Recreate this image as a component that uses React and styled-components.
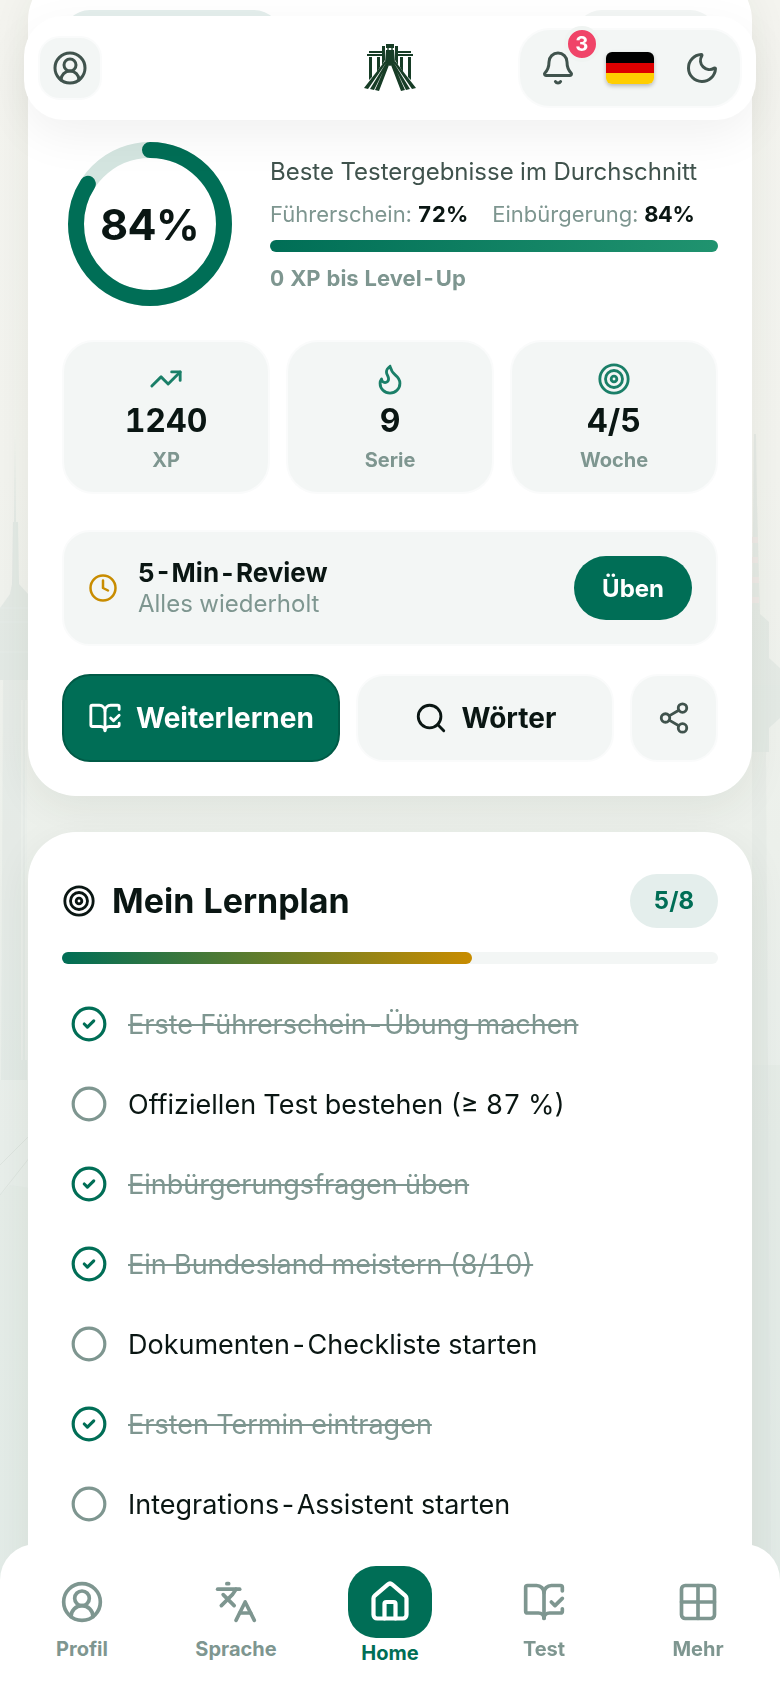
import React, { useState } from "react";
import styled, { createGlobalStyle } from "styled-components";
import {
  Bell,
  BookOpenCheck,
  Circle,
  CircleCheck,
  CircleUserRound,
  Clock,
  Flame,
  Grid2x2,
  House,
  Languages,
  Moon,
  Search,
  Share2,
  Target,
  TrendingUp,
} from "lucide-react";

const colors = {
  primary: "#006e56",
  primaryDark: "#005a46",
  primarySoft: "#e4eeec",
  amber: "#c88c00",
  text: "#0a1613",
  textSoft: "#40534d",
  muted: "#7e9690",
  tile: "#f3f6f5",
  tileBorder: "#fafbfb",
};

const stats = [
  { icon: TrendingUp, value: "1240", label: "XP" },
  { icon: Flame, value: "9", label: "Serie" },
  { icon: Target, value: "4/5", label: "Woche" },
];

const initialTasks = [
  { id: "fuehrerschein", label: "Erste Führerschein-Übung machen", done: true },
  { id: "test", label: "Offiziellen Test bestehen (≥ 87 %)", done: false },
  { id: "fragen", label: "Einbürgerungsfragen üben", done: true },
  { id: "bundesland", label: "Ein Bundesland meistern (8/10)", done: true },
  { id: "dokumente", label: "Dokumenten-Checkliste starten", done: false },
  { id: "termin", label: "Ersten Termin eintragen", done: true },
  { id: "assistent", label: "Integrations-Assistent starten", done: false },
];

const navItems = [
  { icon: CircleUserRound, label: "Profil" },
  { icon: Languages, label: "Sprache" },
  { icon: House, label: "Home", active: true },
  { icon: BookOpenCheck, label: "Test" },
  { icon: Grid2x2, label: "Mehr" },
];

function LogoHalf() {
  return (
    <>
      <path d="M6 8h13v2H6zM4 11h15v2H4z" />
      <path d="M6 14h3v20l-3 3zM14 14h3v10l-3 5z" />
      <path d="M19 3h3v14l-3 5z" />
      <path d="M22 18L1 45l4 1 18-26zM23 20L7 46l4 1 13-26zM24 20L12 47l4 1 10-26z" />
    </>
  );
}

function Logo() {
  return (
    <svg width="54" height="50" viewBox="0 0 54 50" fill="#173d26">
      <LogoHalf />
      <g transform="translate(54 0) scale(-1 1)">
        <LogoHalf />
      </g>
      <path d="M23 1h8v4h-8zM23 7h8l1 13-5 3-5-3z" />
      <path d="M24 5h2v2h-2zM28 5h2v2h-2z" fill="#5d7a68" />
    </svg>
  );
}

function ScoreRing({ value }) {
  const length = 2 * Math.PI * 74;
  return (
    <Ring>
      <svg width="176" height="176" viewBox="0 0 176 176" fill="none">
        <circle cx="88" cy="88" r="74" stroke="#d4e5e0" strokeWidth="16" />
        <circle
          cx="88"
          cy="88"
          r="74"
          stroke={colors.primary}
          strokeWidth="16"
          strokeLinecap="round"
          strokeDasharray={`${(length * value) / 100} ${length}`}
          transform="rotate(-90 88 88)"
        />
      </svg>
      <RingValue>{value}%</RingValue>
    </Ring>
  );
}

function Skyline() {
  return (
    <Backdrop>
      <svg width="30" height="1250" viewBox="0 0 30 1250">
        <g fill="#d6dfdc" opacity=".5">
          <path d="M15 4l1 88h2l1 62 9 10v8h2v78H0v-72l10-14 2-10 1-62h1z" />
          <path d="M3 250h24v400H1z" opacity=".6" />
          <path d="M0 765l10-10 20 3v492H0z" opacity=".35" />
        </g>
        <path d="M0 178h30M0 192h30M0 222h30" stroke="#e6ebe7" />
        <path d="M22 270v360M26 270v360" stroke="#eef2ed" />
        <path d="M0 735l30-30M0 765l30-38" stroke="#dde4df" />
      </svg>
      <svg width="28" height="1250" viewBox="0 0 28 1250">
        <g fill="#d6dfdc" opacity=".45">
          <path d="M2 4h2l1 70 3 110 9 8v36l11 10v50l-11 10v24H0V184z" />
          <path d="M0 322h14l6 928H0z" opacity=".5" />
          <path d="M0 635h28v615H0z" opacity=".4" />
        </g>
        <path d="M0 110h6M0 130h6M0 150h7M0 170h7" stroke="#eee9e6" strokeWidth="6" />
      </svg>
    </Backdrop>
  );
}

export default function App() {
  const [tasks, setTasks] = useState(initialTasks);

  const toggle = (id) =>
    setTasks(tasks.map((t) => (t.id === id ? { ...t, done: !t.done } : t)));

  const done = tasks.filter((t) => t.done).length + 1;
  const total = tasks.length + 1;

  return (
    <Page>
      <GlobalStyle />
      <Skyline />
      <Header>
        <ProfileButton type="button" aria-label="Profil">
          <CircleUserRound size={36} />
        </ProfileButton>
        <Logo />
        <HeaderActions>
          <ActionButton type="button" aria-label="Benachrichtigungen">
            <Bell size={36} />
            <Badge>3</Badge>
          </ActionButton>
          <ActionButton type="button" aria-label="Deutsch">
            <Flag />
          </ActionButton>
          <ActionButton type="button" aria-label="Dunkelmodus">
            <Moon size={36} />
          </ActionButton>
        </HeaderActions>
      </Header>

      <Main>
        <SummaryCard>
          <ChipRow>
            <Chip $width="220px" $color={colors.primarySoft} />
            <Chip $width="144px" $color={colors.tile} />
          </ChipRow>
          <Score>
            <ScoreRing value={84} />
            <ScoreText>
              <ScoreTitle>Beste Testergebnisse im Durchschnitt</ScoreTitle>
              <ScoreDetails>
                <span>
                  Führerschein: <strong>72%</strong>
                </span>
                <span>
                  Einbürgerung: <strong>84%</strong>
                </span>
              </ScoreDetails>
              <LevelBar />
              <LevelHint>0 XP bis Level-Up</LevelHint>
            </ScoreText>
          </Score>
          <Stats>
            {stats.map(({ icon: Icon, value, label }) => (
              <Stat key={label}>
                <Icon size={34} />
                <StatValue>{value}</StatValue>
                <StatLabel>{label}</StatLabel>
              </Stat>
            ))}
          </Stats>
          <Review>
            <Clock size={30} color={colors.amber} />
            <ReviewText>
              <ReviewTitle>5-Min-Review</ReviewTitle>
              <ReviewHint>Alles wiederholt</ReviewHint>
            </ReviewText>
            <PracticeButton type="button">Üben</PracticeButton>
          </Review>
          <Actions>
            <PrimaryButton type="button">
              <BookOpenCheck size={34} />
              Weiterlernen
            </PrimaryButton>
            <SecondaryButton type="button">
              <Search size={34} />
              Wörter
            </SecondaryButton>
            <ShareButton type="button" aria-label="Teilen">
              <Share2 size={34} />
            </ShareButton>
          </Actions>
        </SummaryCard>

        <PlanCard>
          <PlanHeader>
            <Target size={34} />
            <PlanTitle>Mein Lernplan</PlanTitle>
            <PlanCount>
              {done}/{total}
            </PlanCount>
          </PlanHeader>
          <Progress>
            <ProgressFill style={{ width: `${(done / total) * 100}%` }} />
          </Progress>
          <TaskList>
            {tasks.map((task) => (
              <li key={task.id}>
                <Task $done={task.done}>
                  <TaskInput
                    type="checkbox"
                    checked={task.done}
                    onChange={() => toggle(task.id)}
                  />
                  {task.done ? <CircleCheck size={38} /> : <Circle size={38} />}
                  <TaskLabel>{task.label}</TaskLabel>
                </Task>
              </li>
            ))}
          </TaskList>
        </PlanCard>
      </Main>

      <Nav>
        {navItems.map(({ icon: Icon, label, active }) => (
          <NavLink key={label} href="#" $active={active}>
            <NavIcon $active={active}>
              <Icon size={44} strokeWidth={active ? 2.3 : 2} />
            </NavIcon>
            {label}
          </NavLink>
        ))}
      </Nav>
    </Page>
  );
}

const GlobalStyle = createGlobalStyle`
  * {
    box-sizing: border-box;
  }
  body {
    margin: 0;
    overflow: hidden;
    font-family: Inter, "Liberation Sans", sans-serif;
    font-variant-numeric: tabular-nums;
    color: ${colors.text};
  }
  button {
    font: inherit;
    font-variant-numeric: inherit;
    color: inherit;
    cursor: pointer;
  }
  svg {
    display: block;
    flex-shrink: 0;
  }
`;

const Page = styled.div`
  height: 100vh;
  overflow: hidden;
  background: linear-gradient(
    #f4f4ef 0%,
    #f2f3ee 28%,
    #ecf0eb 50%,
    #e8eeea 68%,
    #e5edea 100%
  );
`;

const Backdrop = styled.div`
  position: fixed;
  inset: 430px 0 0;
  display: flex;
  justify-content: space-between;
`;

const Header = styled.header`
  position: fixed;
  z-index: 2;
  top: 16px;
  left: 24px;
  right: 24px;
  height: 104px;
  padding: 0 14px;
  display: grid;
  grid-template-columns: 1fr auto 1fr;
  align-items: center;
  border-radius: 40px;
  background: #fff;
  box-shadow: 0 16px 48px rgba(10, 22, 19, 0.06);
`;

const ProfileButton = styled.button`
  display: grid;
  place-items: center;
  width: 64px;
  height: 64px;
  padding: 0;
  border: 2px solid ${colors.tileBorder};
  border-radius: 22px;
  background: ${colors.tile};
  && {
    color: ${colors.textSoft};
  }
`;

const HeaderActions = styled.div`
  justify-self: end;
  display: flex;
  padding: 0 2px;
  border: 2px solid ${colors.tileBorder};
  border-radius: 32px;
  background: ${colors.tile};
  color: ${colors.textSoft};
`;

const ActionButton = styled.button`
  position: relative;
  display: grid;
  place-items: center;
  width: 72px;
  height: 76px;
  padding: 0;
  border: none;
  background: none;
`;

const Badge = styled.span`
  position: absolute;
  top: -4px;
  right: -6px;
  width: 36px;
  height: 36px;
  border: 4px solid #f0f4f2;
  border-radius: 50%;
  background: #f04468;
  color: #fff;
  font-size: 20px;
  font-weight: 700;
  line-height: 28px;
  text-align: center;
`;

const Flag = styled.span`
  width: 48px;
  height: 32px;
  border-radius: 6px;
  background: linear-gradient(
    #000 0 33%,
    #dd0000 33% 66%,
    #ffce00 66% 100%
  );
  box-shadow: 0 2px 4px rgba(0, 0, 0, 0.25);
`;

const Main = styled.main`
  position: relative;
  display: flex;
  flex-direction: column;
  gap: 36px;
  margin-top: -28px;
  padding: 0 28px;
`;

const Card = styled.section`
  padding: 38px 34px 34px;
  border-radius: 48px;
  background: #fff;
  box-shadow: 0 12px 40px rgba(40, 50, 30, 0.07);
`;

const SummaryCard = styled(Card)`
  display: flex;
  flex-direction: column;
`;

const ChipRow = styled.div`
  display: flex;
  justify-content: space-between;
  margin-bottom: 70px;
`;

const Chip = styled.span`
  width: ${(props) => props.$width};
  height: 56px;
  border-radius: 28px;
  background: ${(props) => props.$color};
`;

const Score = styled.div`
  display: flex;
  align-items: center;
  gap: 32px;
  margin-bottom: 28px;
`;

const Ring = styled.div`
  display: grid;
  place-items: center;
  > * {
    grid-area: 1 / 1;
  }
`;

const RingValue = styled.span`
  font-size: 43px;
  font-weight: 700;
`;

const ScoreText = styled.div`
  flex: 1;
  min-width: 0;
`;

const ScoreTitle = styled.p`
  margin: 0 0 12px;
  color: ${colors.textSoft};
  font-size: 24px;
  line-height: 32px;
`;

const ScoreDetails = styled.p`
  display: flex;
  gap: 24px;
  margin: 0 0 12px;
  color: ${colors.muted};
  font-size: 22px;
  line-height: 28px;
  strong {
    color: ${colors.text};
  }
`;

const LevelBar = styled.div`
  height: 12px;
  border-radius: 6px;
  background: linear-gradient(90deg, ${colors.primary}, #20936f);
`;

const LevelHint = styled.p`
  margin: 12px 0 0;
  color: ${colors.muted};
  font-size: 22px;
  font-weight: 700;
  line-height: 28px;
`;

const Stats = styled.div`
  display: grid;
  grid-template-columns: repeat(3, 1fr);
  gap: 16px;
  margin-bottom: 36px;
`;

const Stat = styled.div`
  display: flex;
  flex-direction: column;
  align-items: center;
  padding: 20px;
  border: 2px solid ${colors.tileBorder};
  border-radius: 32px;
  background: ${colors.tile};
  svg {
    color: #1a7f68;
  }
`;

const StatValue = styled.strong`
  margin: 5px 0 7px;
  font-size: 32px;
  line-height: 40px;
`;

const StatLabel = styled.span`
  color: ${colors.muted};
  font-size: 20px;
  font-weight: 700;
  line-height: 24px;
`;

const Review = styled.div`
  display: flex;
  align-items: center;
  gap: 20px;
  padding: 24px;
  border: 2px solid ${colors.tileBorder};
  border-radius: 28px;
  background: ${colors.tile};
  margin-bottom: 28px;
`;

const ReviewText = styled.div`
  flex: 1;
`;

const ReviewTitle = styled.div`
  font-size: 26px;
  font-weight: 700;
  line-height: 32px;
`;

const ReviewHint = styled.div`
  color: ${colors.muted};
  font-size: 24px;
  line-height: 30px;
`;

const PracticeButton = styled.button`
  height: 64px;
  padding: 0 28px;
  border: none;
  border-radius: 32px;
  background: ${colors.primary};
  && {
    color: #fff;
    font-size: 24px;
    font-weight: 700;
  }
`;

const Actions = styled.div`
  display: flex;
  gap: 16px;
`;

const SecondaryButton = styled.button`
  flex: 1;
  display: flex;
  align-items: center;
  justify-content: center;
  gap: 14px;
  height: 88px;
  padding: 0 24px;
  border: 2px solid ${colors.tileBorder};
  border-radius: 28px;
  background: ${colors.tile};
  && {
    font-size: 28px;
    font-weight: 700;
  }
`;

const PrimaryButton = styled(SecondaryButton)`
  flex: none;
  border-color: ${colors.primaryDark};
  background: ${colors.primary};
  && {
    color: #fff;
  }
`;

const ShareButton = styled(SecondaryButton)`
  flex: none;
  width: 88px;
  padding: 0;
  && {
    color: ${colors.textSoft};
  }
`;

const PlanCard = styled(Card)`
  padding-top: 42px;
  padding-bottom: 120px;
`;

const PlanHeader = styled.div`
  display: flex;
  align-items: center;
  gap: 16px;
  margin-bottom: 24px;
`;

const PlanTitle = styled.h2`
  flex: 1;
  margin: 0;
  font-size: 34px;
  font-weight: 700;
  line-height: 40px;
`;

const PlanCount = styled.span`
  padding: 0 24px;
  border-radius: 28px;
  background: ${colors.primarySoft};
  color: ${colors.primary};
  font-size: 24px;
  font-weight: 700;
  line-height: 54px;
`;

const Progress = styled.div`
  height: 12px;
  border-radius: 6px;
  background: ${colors.tile};
`;

const ProgressFill = styled.div`
  height: 100%;
  border-radius: 6px;
  background: linear-gradient(90deg, ${colors.primary}, ${colors.amber});
`;

const TaskList = styled.ul`
  margin: 20px 0 0;
  padding: 0;
  list-style: none;
`;

const TaskLabel = styled.span``;

const Task = styled.label`
  display: flex;
  align-items: center;
  gap: 20px;
  height: 80px;
  padding: 0 8px;
  font-size: 27px;
  cursor: pointer;
  svg {
    color: ${(props) => (props.$done ? colors.primary : colors.muted)};
  }
  ${TaskLabel} {
    color: ${(props) => (props.$done ? colors.muted : colors.text)};
    text-decoration: ${(props) => (props.$done ? "line-through" : "none")};
  }
`;

const TaskInput = styled.input`
  position: absolute;
  opacity: 0;
`;

const Nav = styled.nav`
  position: fixed;
  z-index: 2;
  left: 0;
  right: 0;
  bottom: 0;
  display: grid;
  grid-template-columns: repeat(5, 1fr);
  gap: 6px;
  height: 144px;
  padding: 22px 8px 0;
  border-radius: 36px 36px 0 0;
  background: #fff;
`;

const NavLink = styled.a`
  display: flex;
  flex-direction: column;
  align-items: center;
  gap: ${(props) => (props.$active ? "0" : "10px")};
  padding-top: ${(props) => (props.$active ? "0" : "14px")};
  color: ${(props) => (props.$active ? colors.primary : colors.muted)};
  font-size: 20px;
  font-weight: 700;
  line-height: 30px;
  text-decoration: none;
`;

const NavIcon = styled.span`
  padding: ${(props) => (props.$active ? "14px 20px" : "0")};
  border-radius: 28px;
  background: ${(props) => (props.$active ? colors.primary : "none")};
  color: ${(props) => (props.$active ? "#fff" : "inherit")};
`;
